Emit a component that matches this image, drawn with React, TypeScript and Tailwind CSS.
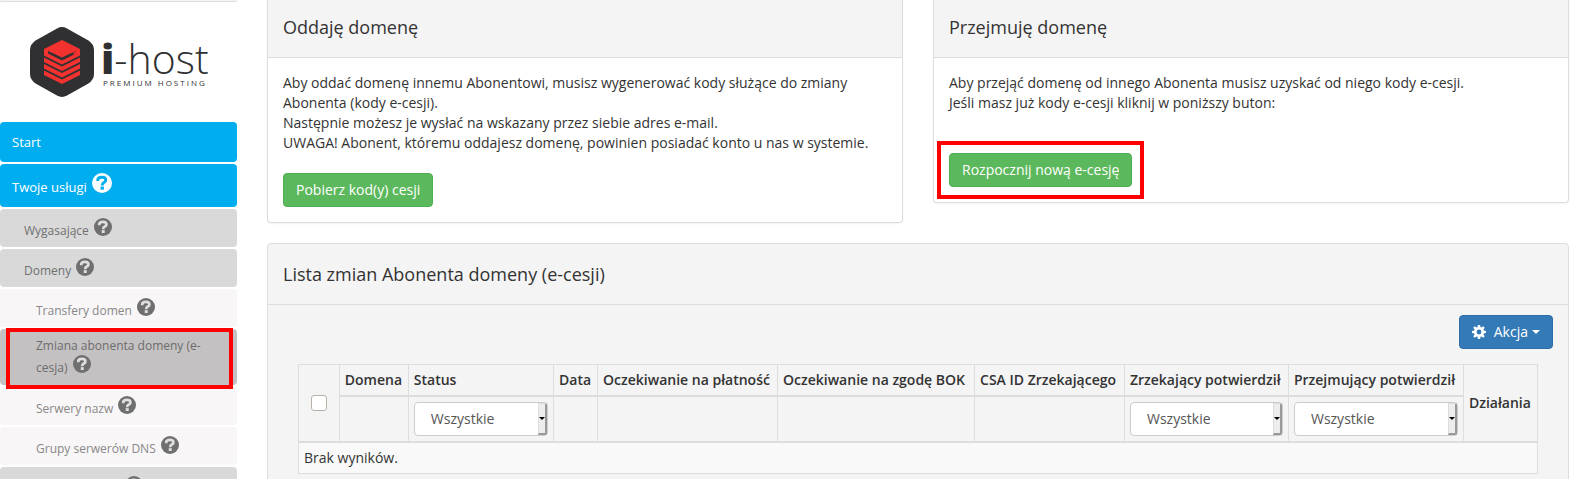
import { ReactNode } from "react";
import clsx from "clsx";

type MenuLevel = "main" | "section" | "page" | "current";

interface MenuItem {
  label: string;
  level: MenuLevel;
  help?: boolean;
}

const menu: MenuItem[] = [
  { label: "Start", level: "main" },
  { label: "Twoje usługi", level: "main", help: true },
  { label: "Wygasające", level: "section", help: true },
  { label: "Domeny", level: "section", help: true },
  { label: "Transfery domen", level: "page", help: true },
  { label: "Zmiana abonenta domeny (e-cesja)", level: "current", help: true },
  { label: "Serwery nazw", level: "page", help: true },
  { label: "Grupy serwerów DNS", level: "page", help: true },
  { label: "Serwery i hosting", level: "section", help: true },
];

const levelClasses: Record<MenuLevel, string> = {
  main: "bg-[#00adef] text-white text-[13px] leading-[22px] px-3 py-[9px]",
  section: "bg-[#d9d9d9] text-[#707070] text-xs leading-[18px] pl-6 pr-3 pt-[9px] pb-[7px]",
  page: "bg-[#f8f6f7] text-[#888] text-xs leading-[18px] pl-9 pr-3 pt-[9px] pb-[7px]",
  current: "bg-[#c4c1c2] text-[#6c6c6c] text-xs leading-[18px] pl-9 pr-3 py-2",
};

function HelpIcon({ className }: { className: string }) {
  return (
    <svg viewBox="0 0 20 20" className={className} aria-hidden="true">
      <circle cx="10" cy="10" r="10" fill="currentColor" />
      <path
        className="fill-none stroke-(--mark)"
        strokeWidth="3"
        d="M5.8 8V7Q6 4.2 9.9 4.2Q13.8 4.2 13.8 7.1Q13.8 8.6 12 9.5Q10.2 10.4 10.2 12.4"
      />
      <rect x="8.6" y="13.5" width="3.3" height="3.2" className="fill-(--mark)" />
    </svg>
  );
}

function CogIcon() {
  return (
    <svg viewBox="0 0 14 14" className="w-3.5 h-3.5" aria-hidden="true">
      <g fill="currentColor">
        {[0, 45, 90, 135].map((angle) => (
          <path key={angle} d="M5.9 0h2.2l.5 3v8l-.5 3H5.9l-.5-3V3z" transform={`rotate(${angle} 7 7)`} />
        ))}
        <circle cx="7" cy="7" r="5" />
      </g>
      <circle cx="7" cy="7" r="2.4" fill="#337ab7" />
    </svg>
  );
}

function Logo() {
  return (
    <a href="#" className="flex items-center pl-[30px] gap-[7px] text-[#303033]">
      <svg viewBox="0 0 64 70" className="w-16 h-[70px] shrink-0" aria-hidden="true">
        <path
          fill="#303033"
          d="M27 1.4Q32-1.3 37 1.4L58 13.2Q64 17 64 23V47Q64 53 58 56.8L37 68.6Q32 71.3 27 68.6L6 56.8Q0 53 0 47V23Q0 17 6 13.2Z"
        />
        <g fill="#f2322f">
          <path d="M32 13L50 22V28.5L32 37.5L14 28.5V22Z" />
          <path d="M14 30.5L32 39.5L50 30.5V35L32 44L14 35Z" />
          <path d="M14 37L32 46L50 37V41.5L32 50.5L14 41.5Z" />
          <path d="M14 43.5L32 52.5L50 43.5V48L32 57L14 48Z" />
        </g>
        <path fill="#303033" d="M18 24L32 30.5L46 24V26.5L32 33.5L18 26.5Z" />
        <path fill="#f2322f" d="M43.5 25.6L46 24.6V26.6L43.5 27.6Z" />
      </svg>
      <div>
        <div className="text-[41px] leading-[41px] font-light">
          <b className="font-extrabold">i</b>-host
        </div>
        <div className="text-[8px] leading-[8px] tracking-[2px] pl-0.5">PREMIUM HOSTING</div>
      </div>
    </a>
  );
}

function Sidebar() {
  return (
    <aside className="w-[237px] shrink-0">
      <div className="h-0.5 border-b border-[#ddd] bg-[#f4f4f4] rounded-b" />
      <div className="py-[25px]">
        <Logo />
      </div>
      <nav className="flex flex-col gap-0.5">
        {menu.map(({ label, level, help }) => (
          <div key={label} className="relative">
            <a href="#" className={clsx("block rounded", levelClasses[level])}>
              {label}{" "}
              {help && level === "main" && (
                <HelpIcon className="inline w-5 h-5 ml-0.5 align-[-1px] text-white [--mark:#00adef]" />
              )}
              {help && level !== "main" && (
                <HelpIcon className="inline w-[18px] h-[18px] ml-0.5 align-[-1px] text-[#6f6f6f] [--mark:#e0dede]" />
              )}
            </a>
            {level === "current" && (
              <span className="absolute z-10 -top-px -bottom-1 left-1.5 right-1 border-4 border-[#f00] pointer-events-none" />
            )}
          </div>
        ))}
      </nav>
    </aside>
  );
}

function Panel({ title, children }: { title: string; children: ReactNode }) {
  return (
    <section className="flex-1 border border-t-0 border-[#ddd] rounded-b bg-white shadow-xs">
      <h3 className="px-[15px] pt-[17px] pb-5 text-lg leading-5 bg-[#f4f4f4] border-b border-[#ddd]">
        {title}
      </h3>
      <div className="p-[15px]">{children}</div>
    </section>
  );
}

function GreenButton({ children }: { children: ReactNode }) {
  return (
    <button
      type="button"
      className="block px-3 py-1.5 text-sm leading-5 text-white bg-[#5cb85c] border border-[#4cae4c] rounded"
    >
      {children}
    </button>
  );
}

function FilterSelect({ label }: { label: string }) {
  return (
    <div className="relative">
      <select
        aria-label={label}
        className="block w-full h-[34px] appearance-none pl-4 pr-3 text-sm font-normal text-[#555] bg-white border border-[#ccc] rounded"
      >
        <option>Wszystkie</option>
      </select>
      <span className="absolute inset-y-px right-px w-[9px] flex items-center justify-center bg-[#ededed] border-t border-l border-t-[#ddd] border-l-[#ddd] border-r-2 border-b-2 border-r-[#999] border-b-[#999] rounded-r-xs pointer-events-none">
        <svg viewBox="0 0 6 3" className="w-1.5 h-[3px] shrink-0" aria-hidden="true">
          <path d="M0 0h6L3 3z" />
        </svg>
      </span>
    </div>
  );
}

const columns = [
  { title: "Domena", width: "w-[69px]" },
  { title: "Status", width: "w-[146px]", filter: true },
  { title: "Data", width: "w-[44px]" },
  { title: "Oczekiwanie na płatność", width: "w-[180px]" },
  { title: "Oczekiwanie na zgodę BOK", width: "w-[197px]" },
  { title: "CSA ID Zrzekającego", width: "w-[150px]" },
  { title: "Zrzekający potwierdził", width: "w-[164px]", filter: true },
  { title: "Przejmujący potwierdził", width: "w-[175px]", filter: true },
];

function TransferTable() {
  return (
    <table className="w-full border-collapse text-sm leading-5 text-left whitespace-nowrap">
      <colgroup>
        <col className="w-[41px]" />
        {columns.map((c) => (
          <col key={c.title} className={c.width} />
        ))}
        <col className="w-[74px]" />
      </colgroup>
      <thead>
        <tr>
          <th rowSpan={2} className="border border-b-2 border-[#ddd]">
            <input
              type="checkbox"
              aria-label="Zaznacz wszystkie"
              className="block mx-auto w-4 h-4 appearance-none bg-white border border-[#b8b2aa] rounded-[3px]"
            />
          </th>
          {columns.map((c) => (
            <th key={c.title} className="h-[31px] px-[5px] font-semibold border border-b-2 border-[#ddd]">
              {c.title}
            </th>
          ))}
          <th rowSpan={2} className="px-[5px] font-semibold border border-b-2 border-[#ddd]">
            Działania
          </th>
        </tr>
        <tr>
          {columns.map((c) => (
            <td key={c.title} className="h-[46px] px-[5px] border border-b-2 border-[#ddd]">
              {c.filter && <FilterSelect label={c.title} />}
            </td>
          ))}
        </tr>
      </thead>
      <tbody>
        <tr>
          <td colSpan={10} className="h-8 px-[5px] bg-[#f9f9f9] border border-[#ddd]">
            Brak wyników.
          </td>
        </tr>
      </tbody>
    </table>
  );
}

export default function App() {
  return (
    <div className="flex h-screen overflow-hidden gap-[30px] pr-px bg-white text-[#333] font-['Open_Sans',sans-serif]">
      <Sidebar />
      <main className="flex-1 min-w-0">
        <div className="flex items-start gap-[30px] mb-5">
          <Panel title="Oddaję domenę">
            <p className="text-sm leading-5 mb-5">
              Aby oddać domenę innemu Abonentowi, musisz wygenerować kody służące do zmiany Abonenta (kody e-cesji).
              <br />
              Następnie możesz je wysłać na wskazany przez siebie adres e-mail.
              <br />
              UWAGA! Abonent, któremu oddajesz domenę, powinien posiadać konto u nas w systemie.
            </p>
            <GreenButton>Pobierz kod(y) cesji</GreenButton>
          </Panel>
          <Panel title="Przejmuję domenę">
            <p className="text-sm leading-5 mb-10">
              Aby przejąć domenę od innego Abonenta musisz uzyskać od niego kody e-cesji.
              <br />
              Jeśli masz już kody e-cesji kliknij w poniższy buton:
            </p>
            <div className="relative w-fit">
              <GreenButton>Rozpocznij nową e-cesję</GreenButton>
              <span className="absolute -inset-3 border-4 border-[#f00] pointer-events-none" />
            </div>
          </Panel>
        </div>
        <section className="border border-[#ddd] rounded bg-[#f4f4f4]">
          <h3 className="px-[15px] py-5 text-lg leading-5 border-b border-[#ddd]">
            Lista zmian Abonenta domeny (e-cesji)
          </h3>
          <div className="px-[15px] pt-2.5 pb-[30px]">
            <button
              type="button"
              className="flex items-center ml-auto px-3 py-1.5 text-sm leading-5 text-white bg-[#337ab7] border border-[#2e6da4] rounded"
            >
              <CogIcon />
              <span className="ml-2 mr-1">Akcja</span>
              <svg viewBox="0 0 8 4" className="w-2 h-1" aria-hidden="true">
                <path d="M0 0h8L4 4z" fill="currentColor" />
              </svg>
            </button>
            <div className="px-[15px] pt-[15px]">
              <TransferTable />
            </div>
          </div>
        </section>
      </main>
    </div>
  );
}
